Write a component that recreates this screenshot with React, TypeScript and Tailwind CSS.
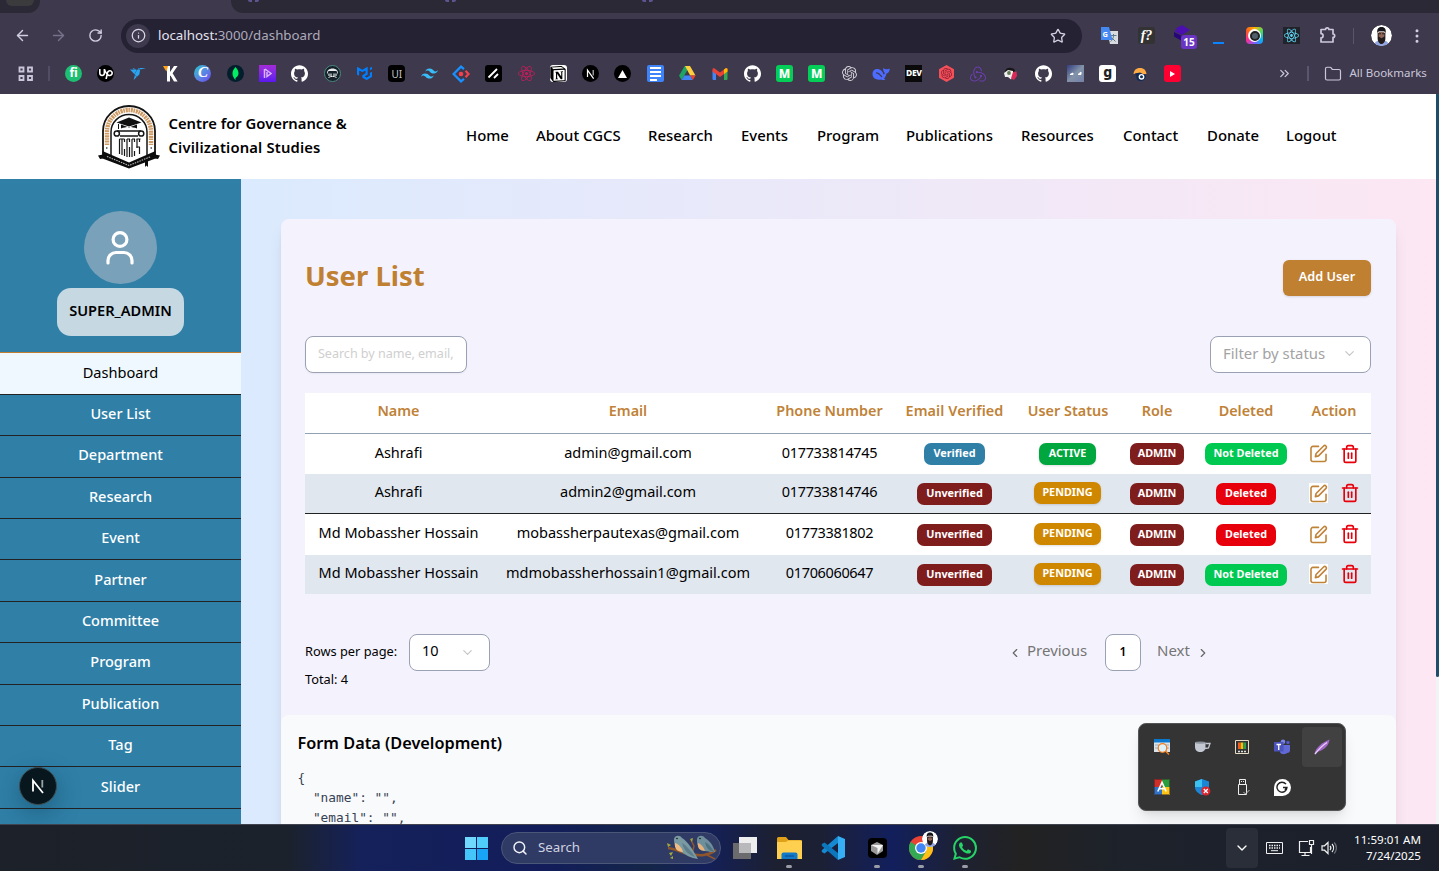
import type { ReactNode } from "react";
import {
  ArrowLeft,
  ArrowRight,
  RotateCw,
  Info,
  Star,
  EllipsisVertical,
  ChevronsRight,
  ChevronDown,
  ChevronLeft,
  ChevronRight,
  Folder,
  Search,
  Trash2,
} from "lucide-react";
import {
  SiUpwork,
  SiFreelancer,
  SiGithub,
  SiMui,
  SiTailwindcss,
  SiReact,
  SiNotion,
  SiOpenai,
  SiRedux,
  SiWhatsapp,
} from "react-icons/si";

const ui = "font-['Noto_Sans','Open_Sans',sans-serif]";

function Tile({ className, children }: { className: string; children?: ReactNode }) {
  return (
    <div className={`flex h-[17px] w-[17px] items-center justify-center ${className}`}>{children}</div>
  );
}

function NextMark({ size }: { size: number }) {
  return (
    <svg width={size} height={size} viewBox="0 0 17 17" fill="none">
      <path d="M5.5 12V5.2L11.6 13.6" stroke="#fff" strokeWidth="1.2" />
      <path d="M11.2 5v5.6" stroke="#bbb" strokeWidth="1.2" />
    </svg>
  );
}

const bookmarks: ReactNode[] = [
  <Tile className="rounded-full bg-[#1dbf73] pb-0.5 text-[12px] font-bold leading-none text-white">fi</Tile>,
  <Tile className="rounded-full bg-black text-white"><SiUpwork size={14} /></Tile>,
  <SiFreelancer size={16} color="#29a4f0" />,
  <svg width="17" height="17" viewBox="0 0 17 17">
    <path d="M5 1h3v6l4-6h3.6l-5 7.3 5 8.2H12L8.500 10.500 8 11v5.500H5z" fill="#fff" />
    <path d="M1 1h5L4.500 6.500 3 4.500z" fill="#ffa116" />
  </svg>,
  <Tile className="rounded-full bg-linear-to-br from-[#00c4cc] to-[#6c3af0] pb-0.5 font-['Liberation_Serif',serif] text-[15px] font-bold italic leading-none text-white">C</Tile>,
  <Tile className="rounded-full bg-[#001e2b]">
    <svg width="7" height="13" viewBox="0 0 7 13"><path d="M3.500 0C8 5 7 9 3.500 11V13C0 9-1 5 3.500 0z" fill="#00ed64" /></svg>
  </Tile>,
  <Tile className="bg-linear-to-b from-[#a42ad8] to-[#5b16ee]">
    <svg width="17" height="17" viewBox="0 0 17 17" fill="none" stroke="#d9b4ff" strokeWidth="1.500"><path d="M5.500 4v9M6 4l6 4.500-4 3V7" /></svg>
  </Tile>,
  <SiGithub size={17} color="#fff" />,
  <Tile className="rounded-full border border-[#4b8a80] bg-[#16202a]">
    <svg width="13" height="13" viewBox="0 0 13 13">
      <path d="M1 7.500C.5 3.500 3 1.500 6.500 1.500S12.500 3.500 12 7.500L10.500 4h-8z" fill="#e7eaea" />
      <path d="M2 6.500h4v2.500H2zM7 6.500h4v2.500H7z" fill="#8d989b" />
      <path d="M2.500 10.500c2-1.500 6-1.500 8 0" stroke="#eee" fill="none" />
    </svg>
  </Tile>,
  <SiMui size={15} color="#007fff" />,
  <Tile className="rounded-[4px] bg-black text-[10px] leading-none text-[#c8c8c8]">UI</Tile>,
  <SiTailwindcss size={17} color="#38bdf8" />,
  <svg width="18" height="18" viewBox="0 0 18 18" fill="none" strokeWidth="2.200">
    <path d="M12 4.200L9 1.600 1.600 9 9 16.400l3-2.600" stroke="#1890ff" />
    <path d="M13.500 5.800L16.500 9l-3 3.200" stroke="#f5414b" />
    <circle cx="9" cy="9" r="2.300" fill="#f5414b" />
  </svg>,
  <Tile className="rounded-[3px] bg-black">
    <svg width="17" height="17" viewBox="0 0 17 17" stroke="#fff" strokeWidth="1.800"><path d="M3.500 12.500l8.500-8.500M9 13l4-4" /></svg>
  </Tile>,
  <SiReact size={17} color="#c21e5b" />,
  <Tile className="rounded-[3px] bg-white text-black"><SiNotion size={16} /></Tile>,
  <Tile className="rounded-full bg-black"><NextMark size={17} /></Tile>,
  <Tile className="rounded-full bg-black">
    <svg width="9" height="8" viewBox="0 0 9 8"><path d="M4.500 0L9 8H0z" fill="#fff" /></svg>
  </Tile>,
  <Tile className="flex-col gap-[2px] rounded-[2px] bg-[#3f83f8]">
    <span className="h-[2px] w-[11px] bg-white" />
    <span className="h-[2px] w-[11px] bg-white" />
    <span className="h-[2px] w-[11px] bg-white" />
    <span className="ml-[3px] h-[2px] w-[7px] self-start bg-white" />
  </Tile>,
  <svg width="17" height="15" viewBox="0 0 17 15">
    <path d="M5.700 0h5L5.300 9.500 2.700 14 0 9.700z" fill="#1fa463" />
    <path d="M6 0h5l5.500 9.500h-5.300z" fill="#ffcf3f" />
    <path d="M5.300 9.500h6L13.700 14H2.700z" fill="#4285f4" />
    <path d="M11.200 9.500h5.400L13.800 14z" fill="#ea4335" />
  </svg>,
  <svg width="16" height="12" viewBox="0 0 16 12">
    <path d="M.5 2.500L4 5v7H1.500a1 1 0 0 1-1-1z" fill="#4285f4" />
    <path d="M15.500 2.500L12 5v7h2.500a1 1 0 0 0 1-1z" fill="#34a853" />
    <path d="M.5 3.500V1.300C.5 0 2 0 3 .7L8 4.500l5-3.800c1-.7 2.500-.7 2.500.6v2.200L8 9z" fill="#ea4335" />
    <path d="M12 1.500l1-.8c1-.7 2.500-.7 2.500.6v2.200L12 6z" fill="#fbbc04" />
  </svg>,
  <SiGithub size={17} color="#fff" />,
  <Tile className="h-[15px] w-[15px] rounded-[3px] bg-[#05ce58] text-[12px] font-extrabold leading-none text-white">M</Tile>,
  <Tile className="h-[15px] w-[15px] rounded-[3px] bg-[#05ce58] text-[12px] font-extrabold leading-none text-white">M</Tile>,
  <SiOpenai size={15} color="#d2d0d9" />,
  <svg width="18" height="14" viewBox="0 0 18 14">
    <path d="M.5 7C.5 3 4 1 7.500 2.500c2 1 3.500 2.500 4 5 1 0 1.500-1 1-2C11 4.500 11 2.500 11.500.8c1 1.500 2 1.700 3 1.200 1 .5 2 0 3.200-.6 0 3-1.200 4.600-3.200 5.100-.5 2.500-1.500 4-2.500 5l1.500 1.200c-2 .8-3.500.3-4.500-.2C4 13.500.5 11 .5 7z" fill="#4d6bfe" />
    <path d="M4 6c3-.5 4.500 2.500 6 4" stroke="#3e394c" fill="none" strokeWidth="1.200" />
  </svg>,
  <Tile className="bg-[#0a0a0a] text-[8.500px] font-extrabold leading-none tracking-[-0.400px] text-white">DEV</Tile>,
  <div className="relative flex items-center justify-center">
    <svg width="17" height="17" viewBox="0 0 17 17"><path d="M8.500 0L16 4.200v8.600L8.500 17 1 12.800V4.200z" fill="#f4505a" /></svg>
    <SiOpenai size={11} color="#8c1f31" className="absolute" />
  </div>,
  <SiRedux size={16} color="#6b3fb0" />,
  <svg width="15" height="15" viewBox="0 0 15 15">
    <path d="M2 6C2 1 9 .5 12 4l-1 3-6 1z" fill="#161616" />
    <path d="M1 7l4-3 5 1v6l-2 2.500-3-2.500H2z" fill="#efefef" />
    <path d="M10 6l3.500-.5L14 10l-3 4-3-1.500z" fill="#d92b57" />
    <circle cx="6" cy="7" r="1.900" fill="#5f7a50" />
  </svg>,
  <SiGithub size={17} color="#fff" />,
  <Tile className="bg-linear-to-br from-[#353d7c] via-[#8292a8] to-[#7580a8]">
    <svg width="17" height="17" viewBox="0 0 17 17"><path d="M3 9.500l3-1.500v1.500zM11 9.500l3-2.500v2.500z" fill="#fff" stroke="#fff" /></svg>
  </Tile>,
  <Tile className="rounded-[3px] bg-white pb-[3px] text-[14px] font-extrabold leading-none text-[#222]">g</Tile>,
  <svg width="14" height="14" viewBox="0 0 14 14">
    <path d="M.5 7C1 2.500 4 1 7 1s6 1.500 6.500 6H9L6 6z" fill="#ffab45" />
    <path d="M2 6.500L7 5.500l6 3c0 3.500-3 5.500-5.500 5.500S3 12 3.500 9z" fill="#0e2a55" />
    <circle cx="8.500" cy="9.800" r="2.200" fill="#0e2a55" stroke="#fff" strokeWidth="1.400" />
  </svg>,
  <Tile className="h-[12px] rounded-[3px] bg-[#ff0033]">
    <svg width="5" height="6" viewBox="0 0 5 6"><path d="M0 0l5 3-5 3z" fill="#fff" /></svg>
  </Tile>,
];

function Portrait({ size }: { size: number }) {
  return (
    <svg width={size} height={size} viewBox="0 0 20 20" className="shrink-0 rounded-full">
      <circle cx="10" cy="10" r="10" fill="#fff" />
      <path d="M3 20c0-4 3-5.500 7-5.500s7 1.500 7 5.500z" fill="#8fa6e0" />
      <path d="M6.300 7.500h7.400v5c0 3-1.700 5.500-3.700 5.500s-3.700-2.500-3.700-5.500z" fill="#231a1c" />
      <path d="M7.200 6.500h5.600v4.500L10 12.500 7.200 11z" fill="#8f6558" />
      <path d="M6 7.500C5.500 3.500 7.500 2 10 2s4.500 1.500 4 5.500L12.500 6h-5z" fill="#17151c" />
      <path d="M7 8.300h2.500M10.500 8.300H13" stroke="#222" />
    </svg>
  );
}

function BrowserBar() {
  return (
    <div className={`h-[94px] bg-[#3e394c] ${ui}`}>
      <div className="flex h-[13px]">
        <div className="w-10 rounded-br-xl bg-[#2c2936]"><div className="ml-1.5 h-1.5 w-7 rounded-b-xl bg-[#3b3b3d]" /></div>
        <div className="ml-[191px] flex flex-1 rounded-bl-xl bg-[#2c2936] pl-[17px]">
          <div className="h-[2px] w-[11px] rounded-b-full border-x-4 border-[#5f5490]" />
          <div className="ml-[186px] h-[2px] w-[11px] rounded-b-full border-x-4 border-[#5f5490]" />
          <div className="ml-[186px] h-[2px] w-[11px] rounded-b-full border-x-4 border-[#5f5490]" />
        </div>
      </div>
      <div className="flex h-[44px] items-center pt-[1px]">
        <div className="flex w-[121px] items-center pl-[14px]">
          <ArrowLeft size={17} color="#d3cfe2" strokeWidth={2} />
          <ArrowRight size={17} color="#77718a" strokeWidth={2} className="ml-[19px]" />
          <RotateCw size={15} color="#d3cfe2" strokeWidth={2.2} className="ml-[20.500px]" />
        </div>
        <div className="flex h-[34px] w-[961px] items-center rounded-full bg-[#252234] pl-[5px] pr-[16px]">
          <div className="flex h-6 w-6 items-center justify-center rounded-full bg-[#3e394c]">
            <Info size={15} color="#dcd8e8" />
          </div>
          <span className="ml-2 text-[13.300px] text-[#aeabba]"><span className="text-[#e6e3ee]">localhost:</span>3000/dashboard</span>
          <Star size={16} color="#d3cfe2" className="ml-auto" />
        </div>
        <div className="ml-[19px] flex flex-1 items-center">
          <svg width="17" height="17" viewBox="0 0 17 17">
            <path d="M6 4h11v13H9z" fill="#d7dbe0" />
            <path d="M9.500 8.500h6M12.500 7v1.500c0 3-1.500 5-3 6M10.500 10.500l4 4" stroke="#607d8b" fill="none" />
            <path d="M0 0h8l3.500 13H0z" fill="#4688f1" />
            <text x="1.500" y="9.500" fontSize="7.500" fontWeight="700" fill="#fff">G</text>
          </svg>
          <Tile className="ml-[20px] h-[16px] w-[16px] rounded-[3px] bg-[#333] font-['Liberation_Serif',serif] text-[14px] font-bold italic leading-none text-white">f?</Tile>
          <div className="relative ml-[19px] mt-[3px] h-[24px] w-[23px]">
            <svg width="19" height="18" viewBox="0 0 19 18"><path d="M8 0l8 5-8 5-8-4 4-1.500L1 4z" fill="#4a0fae" /><path d="M0 7l8 4v5L0 11.500z" fill="#260679" /></svg>
            <span className="absolute bottom-0 right-0 flex h-[14px] w-[16px] items-center justify-center rounded-[3px] bg-[#6b35c4] text-[10px] font-bold leading-none text-white">15</span>
          </div>
          <div className="ml-[16px] mt-[15px] h-[2px] w-[11px] bg-[#0a84ff]" />
          <Tile className="ml-[22px] rounded-[4px] bg-[conic-gradient(#ffb300,#4cd964,#00b8f5,#7a5cff,#ff2d92,#ff5a1f,#ffb300)]">
            <span className="flex h-[13px] w-[13px] items-center justify-center rounded-full bg-white">
              <span className="h-[10px] w-[10px] rounded-full border-2 border-[#222] bg-[#50606b]" />
            </span>
          </Tile>
          <Tile className="ml-[20px] bg-[#20232a]"><SiReact size={15} color="#61dafb" /></Tile>
          <svg width="18" height="18" viewBox="0 0 18 18" fill="none" stroke="#cdc9dc" strokeWidth="1.700" strokeLinejoin="round" className="mb-[2px] ml-[19px]">
            <path d="M2 3.500h4.500a1.700 1.700 0 0 1 3.400 0H14V8a1.700 1.700 0 0 1 0 3.400V16H2v-4.200a2.100 2.100 0 0 0 0-4.200z" />
          </svg>
          <span className="ml-[16px] h-4 w-px bg-[#5b566d]" />
          <div className="ml-[17px]"><Portrait size={21} /></div>
          <EllipsisVertical size={18} color="#d3cfe2" className="ml-[16px]" />
        </div>
      </div>
      <div className="flex h-[33px] items-center pl-[18px]">
        <svg width="16" height="16" viewBox="0 0 16 16" fill="none" stroke="#cbc7da" strokeWidth="1.800" className="shrink-0">
          <path d="M1.500 1.500h4v4h-4zM10 1.500h4v4h-4zM1.500 10h4v4h-4zM10 10h4v4h-4z" />
        </svg>
        <span className="ml-[14px] h-[15px] w-[2px] bg-[#524c64]" />
        <div className="ml-[7.500px] flex">
          {bookmarks.map((b, i) => (
            <div key={i} className="flex w-[32.320px] items-center justify-center">{b}</div>
          ))}
        </div>
        <ChevronsRight size={15} color="#cbc7da" className="ml-[89px] shrink-0" />
        <span className="ml-[15px] h-[15px] w-[2px] bg-[#5b566d]" />
        <Folder size={18} color="#cbc7da" strokeWidth={1.600} className="ml-[15px] shrink-0" />
        <span className="ml-[7px] whitespace-nowrap pb-[1px] text-[11.500px] text-[#cbc7da]">All Bookmarks</span>
      </div>
    </div>
  );
}

function Crest() {
  return (
    <svg width="62" height="64" viewBox="0 0 62 64" fill="none" className="mt-[1px]">
      <path d="M5 50V26a26 25 0 0 1 52 0v24" stroke="#151515" strokeWidth="1.800" />
      <path d="M9 40V26.500a22 21.500 0 0 1 44 0V40" stroke="#cf9a62" strokeWidth="4.400" strokeDasharray="1.600 .8 2.200 .6" />
      <path d="M13 50V27a18 17.500 0 0 1 36 0v23" stroke="#151515" strokeWidth="1.500" />
      <path d="M18.500 17.500L31 12.500l12.500 5L31 21.500z" fill="#111" />
      <path d="M23 19.500v4c5-2 11-2 16 0v-4l-8 3z" fill="#111" />
      <path d="M20.500 19v5" stroke="#111" />
      <path d="M19 26h24M22 31h18" stroke="#151515" strokeWidth="1.500" />
      <circle cx="18.800" cy="28.500" r="2.600" fill="#fff" stroke="#151515" strokeWidth="1.500" />
      <circle cx="43.200" cy="28.500" r="2.600" fill="#fff" stroke="#151515" strokeWidth="1.500" />
      <path d="M21.500 34v15M24 34v16M26.500 34v3M26.500 44v7M29 34v18M31.500 34v3M31.500 42v10M34 34v18M36.500 34v3M36.500 46v5M39 34v9M41.500 34v3M41.500 42v7" stroke="#151515" strokeWidth="1.200" />
      <path d="M21.500 34h5M29 34h3M34 34h3M38.500 34h4M38.500 42h3.500" stroke="#151515" strokeWidth="1.200" />
      <path d="M0 50.500l5-1v4l-3 .5zM62 50.500l-5-1v4l3 .5z" fill="#0c0c0c" />
      <path d="M4.500 46L31 57.500 57.500 46v7.500L31 63.500 4.500 53.500z" fill="#0c0c0c" />
      <path d="M9 51.500l22 9 22-9" stroke="#bbb" strokeWidth="1.100" strokeDasharray="1.500 1" />
      <path d="M47 56h3v6l-1.500-1.500L47 62z" fill="#0c0c0c" />
      <circle cx="8.800" cy="43" r=".8" fill="#111" /><circle cx="53.200" cy="43" r=".8" fill="#111" />
    </svg>
  );
}

function SiteHeader() {
  const item = "whitespace-nowrap";
  return (
    <header className="flex h-[85px] items-center bg-white pl-[98px] text-[14.900px] font-medium text-black">
      <Crest />
      <div className="ml-[8.500px] w-[297.500px] pb-[4px] text-[14.800px] font-semibold leading-6">
        Centre for Governance &amp;<br /><span className="tracking-[0.160px]">Civilizational Studies</span>
      </div>
      <nav className="flex pb-[3px]">
        <span className={`w-[70px] ${item}`}>Home</span>
        <span className={`w-[112px] ${item}`}>About CGCS</span>
        <span className={`w-[93px] ${item}`}>Research</span>
        <span className={`w-[76px] ${item}`}>Events</span>
        <span className={`w-[89px] ${item}`}>Program</span>
        <span className={`w-[115px] ${item}`}>Publications</span>
        <span className={`w-[102px] ${item}`}>Resources</span>
        <span className={`w-[84px] ${item}`}>Contact</span>
        <span className={`w-[79px] ${item}`}>Donate</span>
        <span className={item}>Logout</span>
      </nav>
    </header>
  );
}

const links = ["User List", "Department", "Research", "Event", "Partner", "Committee", "Program", "Publication", "Tag", "Slider"];

function Sidebar() {
  return (
    <aside className="relative w-[241px] shrink-0 bg-[#2f7fa7] text-center">
      <div className="flex h-[174.400px] flex-col items-center border-b border-[#bf7f32] pt-[32px]">
        <div className="flex h-[73px] w-[73px] items-center justify-center rounded-full bg-[#79a1b9]">
          <svg width="28" height="34" viewBox="0 0 28 34" fill="none" stroke="#fff" strokeWidth="3.200" strokeLinecap="round" className="mr-[1px]">
            <circle cx="14" cy="8.500" r="6.900" />
            <path d="M2 32v-2.500a8 8 0 0 1 8-8h8a8 8 0 0 1 8 8V32" />
          </svg>
        </div>
        <div className="mt-[4px] flex h-[48px] w-[127px] items-center justify-center rounded-[14px] bg-[#c6d8e2] pb-[2px] text-[14.600px] font-semibold text-black">SUPER_ADMIN</div>
      </div>
      <div className="flex h-[41.400px] items-center justify-center border-b border-[#222] bg-[#f0f8ff] pb-[1px] text-[14.600px] text-black">Dashboard</div>
      {links.map((l) => (
        <div key={l} className="flex h-[41.400px] items-center justify-center border-b border-[#222] pb-[2px] text-[14.500px] font-medium text-white">{l}</div>
      ))}
      <div className="absolute left-[19px] top-[588px] flex h-[38px] w-[38px] items-center justify-center rounded-full border border-[#3c4a50] bg-[#08171e] shadow-[0_8px_24px_rgba(0,40,60,0.35)]">
        <svg width="16" height="18" viewBox="0 0 16 18" fill="none" strokeWidth="1.800">
          <path d="M3 14.500V3.500L13 16" stroke="#fff" />
          <path d="M12.300 3v7.500" stroke="#9aa3a6" />
        </svg>
      </div>
    </aside>
  );
}

const cols = "grid grid-cols-[187px_272px_131px_119px_108px_70px_108px_71px]";

const users = [
  { name: "Ashrafi", email: "admin@gmail.com", phone: "017733814745", verified: true, active: true, deleted: false, row: "h-[40px] bg-white" },
  { name: "Ashrafi", email: "admin2@gmail.com", phone: "017733814746", verified: false, active: false, deleted: true, row: "h-[40px] bg-[#e1e7ef] border-b border-[#222]" },
  { name: "Md Mobassher Hossain", email: "mobassherpautexas@gmail.com", phone: "01773381802", verified: false, active: false, deleted: true, row: "h-[41px] bg-white" },
  { name: "Md Mobassher Hossain", email: "mdmobassherhossain1@gmail.com", phone: "01706060647", verified: false, active: false, deleted: false, row: "h-[39px] bg-[#e1e7ef]" },
];

function Badge({ className, children }: { className: string; children: ReactNode }) {
  return (
    <span className={`flex h-[22px] items-center justify-center rounded-[7px] pb-px text-[10.800px] font-bold text-white ${className}`}>{children}</span>
  );
}

function UserTable() {
  return (
    <div className="mt-[20px] w-[1066px] text-center text-[14.500px] text-black">
      <div className={`${cols} h-[41px] items-center border-b border-[#90a1b3] bg-white pb-[4px] text-[14.400px] font-semibold text-[#c08237]`}>
        <span>Name</span><span>Email</span><span>Phone Number</span><span className="tracking-[0.100px]">Email Verified</span>
        <span>User Status</span><span>Role</span><span>Deleted</span><span className="pl-[10px] pr-[13px]">Action</span>
      </div>
      {users.map((u, i) => (
        <div key={i} className={`${cols} items-center ${u.row}`}>
          <span className="pb-[3px]">{u.name}</span>
          <span className="pb-[3px]">{u.email}</span>
          <span className="pb-[3px] tracking-[-0.350px]">{u.phone}</span>
          <Badge className={u.verified ? "mx-auto w-[61px] bg-[#2f7fa7]" : "mx-auto w-[75px] bg-[#7f1d1d]"}>{u.verified ? "Verified" : "Unverified"}</Badge>
          <Badge className={`mb-px shadow-sm ${u.active ? "ml-[25px] w-[57px] bg-[#00a63e]" : "ml-[20px] w-[67px] bg-[#d08700]"}`}>{u.active ? "ACTIVE" : "PENDING"}</Badge>
          <Badge className="mx-auto w-[54px] bg-[#7f1d1d]">ADMIN</Badge>
          <Badge className={u.deleted ? "mx-auto w-[60px] bg-[#e7000b]" : "mx-auto w-[82px] bg-[#00c951]"}>{u.deleted ? "Deleted" : "Not Deleted"}</Badge>
          <span className="flex items-center gap-[12px] pb-px pl-[9px]">
            <span className="flex h-[20px] w-[19px] items-center justify-center bg-white">
              <svg width="19" height="19" viewBox="0 0 24 24" fill="none" stroke="#c08237" strokeWidth="2" strokeLinecap="round" strokeLinejoin="round">
                <path d="M12 3H5a2.500 2.500 0 0 0-2.500 2.500v14A2.500 2.500 0 0 0 5 22h14a2.500 2.500 0 0 0 2.500-2.500V13" />
                <path d="M18.400 2.600a2.100 2.100 0 0 1 3 3L12 15l-4 1 1-4z" />
              </svg>
            </span>
            <Trash2 size={20} color="#e7000b" strokeWidth={2} />
          </span>
        </div>
      ))}
    </div>
  );
}

function Content() {
  return (
    <main className="flex-1 bg-linear-to-r from-[#dbeafe] to-[#fce7f3] pl-[40px] pt-[40px]">
      <section className="h-[620px] w-[1115px] rounded-lg bg-[#f4f3fd] shadow-lg">
        <div className="h-[496px] pl-[24px] pr-[25px] pt-[41px]">
          <div className="flex h-[36px] items-start justify-between">
            <h1 className="mt-[-2px] text-[27.500px] font-bold leading-9 text-[#c08032]">User List</h1>
            <div className="flex h-[36px] w-[88px] items-center justify-center rounded-md bg-[#c08032] pb-[2px] text-[12.700px] font-semibold text-white shadow-sm">Add User</div>
          </div>
          <div className="mt-[40px] flex justify-between">
            <div className="flex h-[37px] w-[162px] items-center rounded-lg border border-[#99a1b3] bg-white pb-[1px] pl-[12px] text-[12.600px] text-[#cfcfcf] shadow-xs">
              <span className="whitespace-nowrap tracking-[-0.040px]">Search by name, email,</span>
            </div>
            <div className="flex h-[37px] w-[161px] items-center justify-between rounded-lg border border-[#99a1b3] bg-white pb-[2px] pl-[12px] pr-[13px] text-[14.900px] text-[#a3a3a3]">
              Filter by status<ChevronDown size={15} color="#c4c4c4" strokeWidth={1.800} />
            </div>
          </div>
          <UserTable />
          <div className="mt-[40px] flex items-center">
            <span className="w-[104px] pb-px text-[12.800px] text-black">Rows per page:</span>
            <div className="flex h-[37px] w-[81px] items-center justify-between rounded-lg border border-[#99a1b3] bg-white pl-[12px] pr-[14px] text-[14.500px] text-black">
              <span className="pb-[3px]">10</span><ChevronDown size={15} color="#c4c4c4" strokeWidth={1.800} />
            </div>
            <ChevronLeft size={14} color="#666" className="ml-[518px]" />
            <span className="ml-[5px] w-[78px] pb-[4px] text-[15px] text-[#757575]">Previous</span>
            <div className="flex h-[37px] w-[36px] items-center justify-center rounded-lg border border-[#99a1b3] bg-white pb-[2px] text-[12px] font-semibold text-black">1</div>
            <span className="ml-[16px] w-[39px] pb-[4px] text-[15px] text-[#757575]">Next</span>
            <ChevronRight size={14} color="#666" />
          </div>
          <div className="text-[12.800px] leading-[17px] text-black">Total: 4</div>
        </div>
        <div className="h-[124px] rounded-lg bg-[#f9fafc] pl-[16.500px] pt-[15px]">
          <h2 className="text-[16.300px] font-semibold leading-[27px] text-black">Form Data (Development)</h2>
          <pre className="mt-[11px] font-['DejaVu_Sans_Mono',monospace] text-[12.800px] leading-5 text-[#364153]">{'{\n  "name": "",\n  "email": "",'}</pre>
        </div>
      </section>
    </main>
  );
}

const trayIcons: ReactNode[] = [
  <svg width="16" height="16" viewBox="0 0 16 16"><path d="M0 1h16v12H0z" fill="#dbe3ea" /><path d="M0 0h16v3.500H0z" fill="#0b78d0" /><path d="M1 6h14M1 9h14" stroke="#9aabb8" /><circle cx="8.500" cy="9" r="4.300" fill="#dff1f8" stroke="#f07f22" strokeWidth="1.300" /><path d="M11.500 12l3.500 3.500" stroke="#f07f22" strokeWidth="1.500" /></svg>,
  <svg width="17" height="12" viewBox="0 0 17 12"><path d="M1 1.500h10.500V6c0 3-2 5-5.200 5S1 9 1 6z" fill="#c3c8d3" /><path d="M11.500 2.500H16L14.500 7 11 7.500" fill="none" stroke="#c3c8d3" strokeWidth="1.300" /><ellipse cx="6.300" cy="1.600" rx="5.300" ry="1.200" fill="#8c929e" /></svg>,
  <svg width="14" height="14" viewBox="0 0 14 14"><path d="M.5.500h13v13H.5z" fill="#333" stroke="#e6dcc5" /><path d="M3 2.500h2.700V9H3z" fill="#ef5b25" /><path d="M5.700 2.500h2.600V9H5.700z" fill="#fbbc04" /><path d="M8.300 2.500H11V9H8.300z" fill="#2b9e4e" /><path d="M3 11.500h8" stroke="#ddd" strokeWidth="1.500" strokeDasharray="2 1" /></svg>,
  <svg width="16" height="16" viewBox="0 0 16 16"><circle cx="9" cy="2.800" r="2.300" fill="#7b83eb" /><circle cx="14" cy="3.500" r="1.700" fill="#5059c9" /><path d="M6 6h10v5a3 3 0 0 1-3 3c-1 1.500-6 2-7-1z" fill="#6169d6" /><path d="M0 3h9.500v9.500H0z" fill="#4b53bc" /><path d="M2.500 5.500H7M4.750 5.500V11" stroke="#fff" strokeWidth="1.300" /></svg>,
  <svg width="16" height="16" viewBox="0 0 16 16"><path d="M.5 15.500C1 9 8 3.500 15.500.5 15 6 11 10.500 4.500 12.500z" fill="#a266c8" /><path d="M1 15C5 10 9 6 13 3.500" stroke="#e8d0f5" strokeWidth="1.300" fill="none" /></svg>,
  <svg width="16" height="16" viewBox="0 0 16 16"><path d="M0 0h8v8H0z" fill="#cf2f28" /><path d="M8 0h8v8H8z" fill="#2a9e3d" /><path d="M0 8h8v8H0z" fill="#2f74c8" /><path d="M8 8h8v8H8z" fill="#fbc417" /><path d="M.5.500h15v15H.5z" fill="none" stroke="#3a2020" strokeOpacity=".5" /><path d="M3.800 12.500L8 3.500l4.200 9M5.300 9.800h5.400" stroke="#fff" fill="none" strokeWidth="1.600" /></svg>,
  <svg width="17" height="17" viewBox="0 0 17 17"><path d="M1 2.500L8 0l7 2.500V8c0 4-3 6.500-7 8-4-1.500-7-4-7-8z" fill="#1b86d6" /><path d="M1 2.500L8 0v8H1z" fill="#39c2f2" /><circle cx="11.800" cy="12" r="4.600" fill="#d9252f" /><path d="M9.800 10l4 4M13.800 10l-4 4" stroke="#fff" strokeWidth="1.300" /></svg>,
  <svg width="14" height="17" viewBox="0 0 14 17" fill="none" stroke="#eee" className="ml-[2px]"><path d="M3.500 5.500v-5h6v5M2.500 5.500h8v10h-8zM5 2.500h1M7 2.500h1" /><path d="M7.500 13l2 2 4-4" stroke="#bbb" /></svg>,
  <Tile className="rounded-full rounded-bl-none bg-white"><svg width="12" height="12" viewBox="0 0 12 12" fill="none" stroke="#222" strokeWidth="1.400"><path d="M10 3.200A5 5 0 1 0 11 6.500H7M10.800 6.500L9 9" /></svg></Tile>,
];

function Tray() {
  return (
    <div className="absolute left-[1138px] top-[723px] grid h-[88px] w-[208px] grid-cols-5 grid-rows-2 rounded-lg border border-[#555] bg-[#343435] p-[3px] shadow-lg">
      {trayIcons.map((icon, i) => (
        <div key={i} className={`flex items-center justify-center rounded ${i === 4 ? "bg-[#414142]" : ""}`}>{icon}</div>
      ))}
    </div>
  );
}

function DockItem({ running, children }: { running?: boolean; children: ReactNode }) {
  return (
    <div className="relative flex h-[47px] w-[44px] items-center justify-center">
      {children}
      {running && <span className="absolute bottom-[4px] h-[3px] w-[6px] rounded-full bg-[#9a9ca6]" />}
    </div>
  );
}

function Birds() {
  return (
    <svg width="52" height="26" viewBox="0 0 52 26">
      <path d="M1 13c8 1 14 5 22 6 10 2 18 2 26-4" stroke="#8f552b" strokeWidth="2.600" fill="none" />
      <path d="M40 20l8 4M24 5l3 6-2 8" stroke="#8f552b" strokeWidth="1.500" fill="none" />
      <path d="M7 4c1-4 6-4 8-1 6 4 10 10 16 21-7-1-13-4-18-8C8 13 7 8 7 4z" fill="#7a9aa3" />
      <path d="M15 8c5 3 9 8 13 14-6-2-11-6-13-14z" fill="#5c7d89" />
      <path d="M8 8c4 1 7 5 8 9-6 0-9-4-8-9z" fill="#eebd84" />
      <path d="M30 4c1-4 6-4 8-1 5 3 8 7 10 14-5 0-10 0-14-3-4-3-4-6-4-10z" fill="#708f9c" />
      <path d="M38 7c4 2 7 6 9 10-5-1-8-4-9-10z" fill="#4f7180" />
      <path d="M31 8c3 1 6 4 7 8-5 0-8-3-7-8z" fill="#e5b27c" />
      <path d="M0 8l4 2-3 2zM2 18l4-1-2 4zM23 4l3-1-1 4zM3 23l3-2v3z" fill="#a5a83c" />
      <circle cx="10" cy="3.500" r=".8" fill="#111" /><circle cx="33" cy="3.500" r=".8" fill="#111" />
    </svg>
  );
}

function Taskbar() {
  return (
    <div className={`flex h-[47px] items-center border-t border-[#41444e] bg-[linear-gradient(90deg,#1d2129_0%,#1b222c_20%,#15215a_25%,#121d5a_38%,#152548_45%,#14205a_49%,#1c2030_54%,#1c2035_57%,#121f5c_62%,#1e2130_67%,#222222_71%,#1d222b_78%,#1a1f2b_100%)] pl-[454px] ${ui}`}>
      <DockItem>
        <div className="grid h-[23px] w-[23px] grid-cols-2 gap-px">
          <span className="bg-[#6fd8fc]" /><span className="bg-[#4fcdfb]" /><span className="bg-[#45c6fb]" /><span className="bg-[#18a5f8]" />
        </div>
      </DockItem>
      <div className="ml-[3px] mr-[2px] flex h-[32px] w-[220px] items-center rounded-full border border-[#4c5678] bg-[#303b65] pl-[10px] pr-[1px]">
        <Search size={16} color="#f0f2f8" strokeWidth={2.2} />
        <span className="ml-[10px] flex-1 text-[13.300px] text-[#cfd2e0]">Search</span>
        <Birds />
      </div>
      <DockItem>
        <svg width="24" height="22" viewBox="0 0 24 22"><path d="M6 0h18v16H6z" fill="#eee" /><path d="M0 6h18v16H0z" fill="#6b6b6e" /><path d="M6 6h12v10H6z" fill="#b9b9bb" /></svg>
      </DockItem>
      <DockItem running>
        <svg width="25" height="22" viewBox="0 0 25 22"><path d="M0 1.500A1.500 1.500 0 0 1 1.500 0H9l2.500 3H23a2 2 0 0 1 2 2v4H0z" fill="#e0a118" /><path d="M0 5h9l2-1.500h14V22H0z" fill="#ffd04f" /><path d="M4.500 22v-4.500a2 2 0 0 1 2-2h12a2 2 0 0 1 2 2V22z" fill="#1379c9" /><path d="M8 19h9" stroke="#0b5a9c" strokeWidth="1.500" /></svg>
      </DockItem>
      <DockItem>
        <svg width="24" height="24" viewBox="0 0 24 24"><path d="M17 0v7L3.500 17.500.8 16v-1.800z" fill="#1589d1" /><path d="M17 24v-7L3.500 6.500.8 8v1.800z" fill="#0d77bd" /><path d="M17 0l7 3v18l-7 3z" fill="#35aef3" /></svg>
      </DockItem>
      <DockItem running>
        <div className="flex h-[20px] w-[19px] items-center justify-center rounded-[4px] bg-black">
          <svg width="12" height="13" viewBox="0 0 12 13"><path d="M6 0l6 3v6l-6 4-6-4V3z" fill="#999" /><path d="M0 3h12L6.500 12V6z" fill="#f4f4f4" /></svg>
        </div>
      </DockItem>
      <DockItem running>
        <svg width="24" height="24" viewBox="0 0 24 24"><circle cx="12" cy="12" r="12" fill="#ea4335" /><path d="M12 12L1.600 6A12 12 0 0 0 12 24l5.200-9z" fill="#34a853" /><path d="M12 24A12 12 0 0 0 22.400 6H12l5.200 9z" fill="#fbc116" /><circle cx="12" cy="12" r="6" fill="#fff" /><circle cx="12" cy="12" r="4.700" fill="#4285f4" /></svg>
        <div className="absolute right-[5px] top-[6px]"><Portrait size={16} /></div>
      </DockItem>
      <DockItem running><SiWhatsapp size={24} color="#25d366" /></DockItem>
      <div className="ml-auto flex h-[40px] w-[32px] items-center justify-center rounded bg-[#292e38]"><ChevronDown size={16} color="#fff" /></div>
      <svg width="17" height="12" viewBox="0 0 17 12" fill="none" stroke="#f0f0f0" className="ml-[8px]"><path d="M.5.500h16v11H.5z" /><path d="M3 3.500h11M3 6h11" strokeDasharray="1.500 1" strokeWidth="1.400" /><path d="M5 8.700h7" /></svg>
      <svg width="18" height="18" viewBox="0 0 18 18" fill="none" stroke="#f0f0f0" className="ml-[14px]"><path d="M11 2.500H2.500v11h11V8M8 13.500V16M4.500 16.500h8M12.500 1.500h4v4h-4zM14.500 5.500V15" strokeWidth="1.200" /></svg>
      <svg width="17" height="14" viewBox="0 0 17 14" fill="none" stroke="#f0f0f0" strokeWidth="1.200" className="ml-[6px]"><path d="M1 4.800h2.500L7 1.500v11L3.500 9.200H1z" /><path d="M9 5a3 3 0 0 1 0 4M11 3a6 6 0 0 1 0 8" /><path d="M13.200 1.500a8 8 0 0 1 0 11" stroke="#70747c" /></svg>
      <div className="ml-[15px] mr-[18px] w-[68px] whitespace-nowrap pb-[1px] text-right text-[11.600px] leading-4 text-white">11:59:01 AM<br />7/24/2025</div>
    </div>
  );
}

export default function App() {
  return (
    <div className="relative flex h-[871px] w-[1439px] flex-col overflow-hidden bg-white font-['Noto_Sans','Open_Sans',sans-serif]">
      <BrowserBar />
      <div className="flex h-[730px]">
        <div className="flex w-[1436px] flex-col overflow-hidden">
          <SiteHeader />
          <div className="flex h-[645px]">
            <Sidebar />
            <Content />
          </div>
        </div>
        <div className="w-[3px] bg-[#f1f3f5]"><div className="h-[583px] rounded-b-sm bg-[#1f4e68]" /></div>
      </div>
      <Taskbar />
      <Tray />
    </div>
  );
}
